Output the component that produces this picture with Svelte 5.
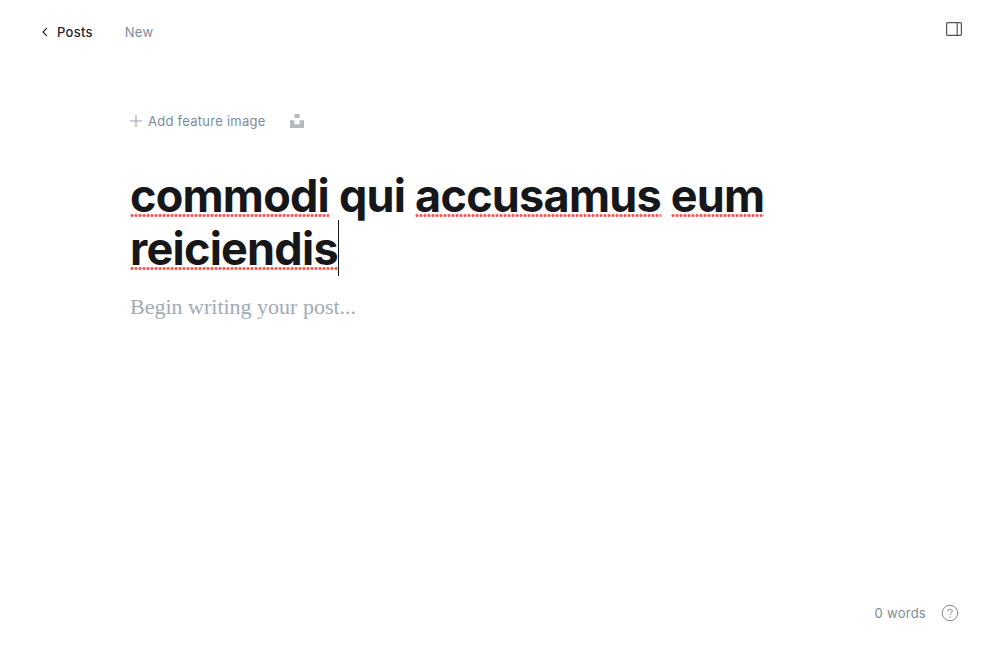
<script>
  let title = $state('commodi qui accusamus eum reiciendis');
  let body = $state('');
  const known = ['qui'];

  const pieces = $derived(title.split(/(\s+)/));
  const wordCount = $derived(body.split(/\s+/).filter(Boolean).length);
</script>

<div class="editor">
  <header>
    <nav aria-label="Breadcrumb">
      <a class="back" href="#posts">
        <svg width="6" height="10" viewBox="0 0 6 10" aria-hidden="true">
          <path d="M4.6 1.4 1 5l3.6 3.6" fill="none" stroke="currentColor" stroke-width="1.1" stroke-linecap="round" stroke-linejoin="round" />
        </svg>
        <span>Posts</span>
      </a>
      <span class="status">New</span>
    </nav>
    <button class="settings" type="button" aria-label="Settings">
      <svg width="16" height="14" viewBox="0 0 16 14" aria-hidden="true">
        <rect x=".6" y=".6" width="14.8" height="12.8" rx="1" fill="none" stroke="currentColor" stroke-width="1.2" />
        <path d="M11.2 1v12" stroke="currentColor" stroke-width="1.2" />
      </svg>
    </button>
  </header>

  <main>
    <div class="feature">
      <button type="button">
        <svg width="12" height="12" viewBox="0 0 12 12" aria-hidden="true">
          <path d="M6 .5v11M.5 6h11" fill="none" stroke="currentColor" stroke-width="1.1" stroke-linecap="round" />
        </svg>
        <span>Add feature image</span>
      </button>
      <button class="unsplash" type="button" aria-label="Choose an Unsplash image">
        <svg width="14" height="14" viewBox="0 0 14 14" aria-hidden="true">
          <path d="M4.4 0h5.2v4H4.4zM0 6.2h4.4v4h5.2v-4H14V14H0z" fill="currentColor" />
        </svg>
      </button>
    </div>

    <div class="title">
      <div class="marks" aria-hidden="true">{#each pieces as piece}{#if piece.trim() && !known.includes(piece)}<span class="misspelt"><span>{piece}</span></span>{:else}{piece}{/if}{/each}<span class="caret"></span></div>
      <textarea aria-label="Post title" rows="1" spellcheck="false" bind:value={title}></textarea>
    </div>

    <textarea class="body" aria-label="Post body" placeholder="Begin writing your post..." rows="4" bind:value={body}></textarea>
  </main>

  <footer>
    <span>{wordCount} words</span>
    <a href="#help" aria-label="Help">
      <svg width="18" height="18" viewBox="0 0 18 18" fill="none" stroke="currentColor" stroke-linecap="round" aria-hidden="true">
        <circle cx="9" cy="9" r="7.8" stroke-width="1" />
        <path d="M6.8 7.2a2.2 2.2 0 1 1 3.2 2c-.7.4-1 .8-1 1.6" stroke-width="1" />
        <circle cx="9" cy="13" r=".7" fill="currentColor" stroke="none" />
      </svg>
    </a>
  </footer>
</div>

<style>
  :global(body) {
    margin: 0;
    background: #fff;
  }

  .editor {
    display: flex;
    flex-direction: column;
    box-sizing: border-box;
    min-height: 100vh;
    padding: 16px 32px 32px;
    color: #7c8b9a;
    font: 13px/20px Inter, sans-serif;
    letter-spacing: 0.02em;
  }

  a {
    color: inherit;
    text-decoration: none;
  }

  button,
  textarea {
    margin: 0;
    padding: 0;
    border: 0;
    outline: 0;
    background: none;
    color: inherit;
    font: inherit;
    letter-spacing: inherit;
  }

  button {
    cursor: pointer;
  }

  svg {
    display: block;
  }

  header {
    display: flex;
    align-items: flex-start;
    justify-content: space-between;
  }

  nav {
    display: flex;
    gap: 32px;
    padding: 6px 10px;
  }

  .back {
    display: flex;
    align-items: center;
    gap: 9px;
    color: #23262a;
    font-weight: 500;
  }

  .settings {
    padding: 6px;
    color: #50565c;
  }

  main {
    flex: 1;
    box-sizing: border-box;
    width: 100%;
    max-width: 740px;
    margin: 0 auto;
    padding-top: 63px;
  }

  .feature {
    display: flex;
    align-items: center;
    gap: 24px;
  }

  .feature button {
    display: flex;
    align-items: center;
    gap: 6px;
  }

  .feature svg {
    color: #95a1ad;
  }

  .feature .unsplash svg {
    color: #b1babf;
  }

  .title {
    display: grid;
    margin-top: 38px;
    color: #15171a;
    font-size: 45px;
    font-weight: 700;
    line-height: 53px;
    letter-spacing: -0.017em;
  }

  .title > * {
    grid-area: 1 / 1;
    overflow-wrap: break-word;
    white-space: pre-wrap;
  }

  .title textarea {
    overflow: hidden;
    resize: none;
    caret-color: transparent;
  }

  .marks,
  .misspelt > span {
    visibility: hidden;
  }

  .misspelt {
    visibility: visible;
    background: radial-gradient(circle, #ff5050 1px, #ff505000 2px) 0 calc(100% - 6px) / 4px 3px repeat-x;
  }

  .caret {
    visibility: visible;
    display: inline-block;
    height: 56px;
    margin: -13px -1px -3px 0;
    border-left: 1px solid #15171a;
    vertical-align: middle;
  }

  .body {
    display: block;
    width: 100%;
    margin-top: 16px;
    resize: none;
    font: 22px/32px "Liberation Serif", serif;
    letter-spacing: 0;
    color: #15171a;
  }

  .body::placeholder {
    color: #a0abb6;
    opacity: 1;
  }

  footer {
    display: flex;
    align-items: center;
    justify-content: flex-end;
    gap: 15px;
    padding: 0 9px 5px;
  }
</style>
